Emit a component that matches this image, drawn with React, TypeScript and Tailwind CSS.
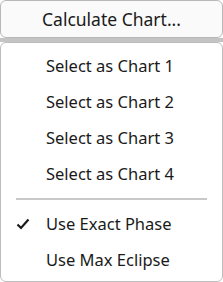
import React from "react";

const items = ["Select as Chart 1", "Select as Chart 2", "Select as Chart 3", "Select as Chart 4"];

function Check() {
  return (
    <svg width="14" height="12" viewBox="0 0 14 12" className="absolute left-[15px] top-1/2 -translate-y-1/2">
      <path d="M1.5 6.5 L5 10 L12.5 1.5" fill="none" stroke="#1a1a1a" strokeWidth="2.2" />
    </svg>
  );
}

function MenuItem({ label, checked }: { label: string; checked?: boolean }) {
  return (
    <div className="relative flex h-[36px] items-center pl-[45px]">
      {checked && <Check />}
      <span>{label}</span>
    </div>
  );
}

export default function App() {
  return (
    <div
      className="flex h-[282px] w-[223px] flex-col bg-white text-[16.5px] text-[#1a1a1a]"
      style={{ fontFamily: '"Noto Sans", "Open Sans", sans-serif' }}
    >
      <div className="flex h-[38px] items-center justify-center rounded-[6px] border border-[#b8b8b8] bg-[#fafafa] text-[17.5px]">
        Calculate Chart...
      </div>
      <div className="h-[4px] bg-[#c4c4c4]" />
      <div className="flex flex-1 flex-col rounded-[6px] border border-[#bdbdbd] bg-white pt-[5px]">
        {items.map((t) => (
          <MenuItem key={t} label={t} />
        ))}
        <div className="mx-[15px] my-[6px] h-[2px] bg-[#c8c8c8]" />
        <MenuItem label="Use Exact Phase" checked />
        <MenuItem label="Use Max Eclipse" />
      </div>
    </div>
  );
}
